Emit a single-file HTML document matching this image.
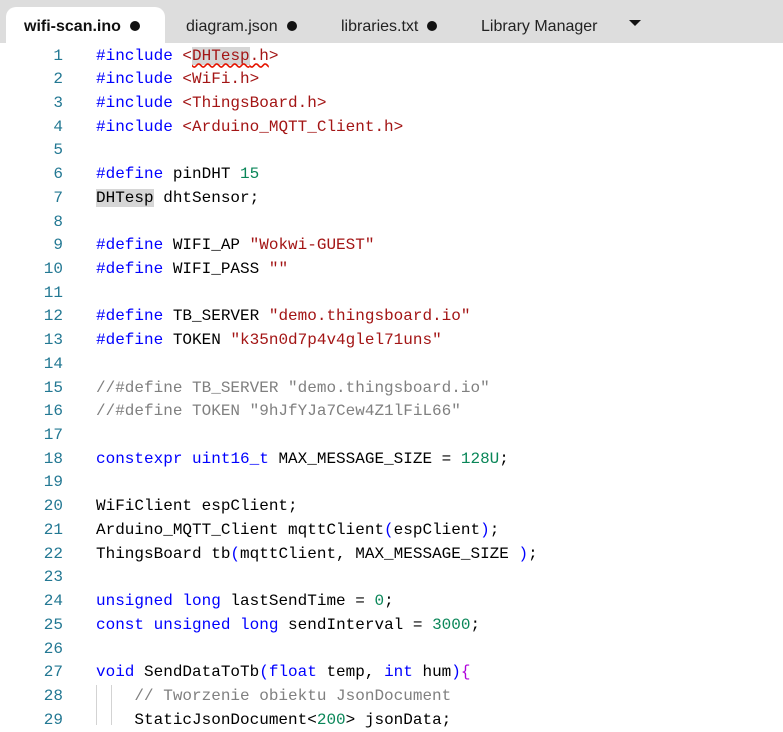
<!DOCTYPE html>
<html><head><meta charset="utf-8"><style>
body{margin:0;width:783px;height:723px;overflow:hidden;background:#fff;position:relative;font-family:"Liberation Sans",Arial,sans-serif}
.bar{position:absolute;left:0;top:0;width:783px;height:43px;background:#dddddd}
.tab{position:absolute;top:18px;font-size:16px;color:#222;white-space:nowrap}
.act{position:absolute;left:6px;top:7px;width:159px;height:36px;background:#fff;border-radius:10px 10px 0 0}
.dot{display:inline-block;width:10px;height:10px;border-radius:50%;background:#111;margin-left:9px;vertical-align:0px}
.l{position:absolute;left:0;height:24px;line-height:24px;font-family:"Liberation Mono",monospace;font-size:16px;white-space:pre;color:#000}
.n{position:absolute;left:0;width:63px;text-align:right;color:#237893}
.c{position:absolute;left:96px}
.k{color:#0000ff}.s{color:#a31515}.m{color:#098658}.g{color:#808080}.p{color:#af00db}
.hl{background:#d6d6d6}
.sq{text-decoration:underline wavy #e51400;text-underline-offset:3px}
.guide{position:absolute;width:1px;background:#d3d3d3}
</style></head><body>
<div class="bar"></div>
<div class="act"></div>
<div class="tab" style="left:24px;font-weight:bold;color:#111">wifi-scan.ino<span class="dot"></span></div>
<div class="tab" style="left:186px">diagram.json<span class="dot"></span></div>
<div class="tab" style="left:341px">libraries.txt<span class="dot"></span></div>
<div class="tab" style="left:481px">Library Manager</div>
<div style="position:absolute;left:629px;top:20px;width:0;height:0;border-left:6px solid transparent;border-right:6px solid transparent;border-top:6px solid #111"></div>
<div class="guide" style="left:96px;top:685px;height:40px"></div>
<div class="guide" style="left:111px;top:685px;height:40px"></div>
<div id="code"></div>
<script>
var L=[
'<span class="k">#include</span> <span class="s">&lt;<span class="sq"><span class="hl">DHTesp</span>.h</span>&gt;</span>',
'<span class="k">#include</span> <span class="s">&lt;WiFi.h&gt;</span>',
'<span class="k">#include</span> <span class="s">&lt;ThingsBoard.h&gt;</span>',
'<span class="k">#include</span> <span class="s">&lt;Arduino_MQTT_Client.h&gt;</span>',
'',
'<span class="k">#define</span> pinDHT <span class="m">15</span>',
'<span class="hl">DHTesp</span> dhtSensor;',
'',
'<span class="k">#define</span> WIFI_AP <span class="s">"Wokwi-GUEST"</span>',
'<span class="k">#define</span> WIFI_PASS <span class="s">""</span>',
'',
'<span class="k">#define</span> TB_SERVER <span class="s">"demo.thingsboard.io"</span>',
'<span class="k">#define</span> TOKEN <span class="s">"k35n0d7p4v4glel71uns"</span>',
'',
'<span class="g">//#define TB_SERVER "demo.thingsboard.io"</span>',
'<span class="g">//#define TOKEN "9hJfYJa7Cew4Z1lFiL66"</span>',
'',
'<span class="k">constexpr</span> <span class="k">uint16_t</span> MAX_MESSAGE_SIZE = <span class="m">128U</span>;',
'',
'WiFiClient espClient;',
'Arduino_MQTT_Client mqttClient<span class="k">(</span>espClient<span class="k">)</span>;',
'ThingsBoard tb<span class="k">(</span>mqttClient, MAX_MESSAGE_SIZE <span class="k">)</span>;',
'',
'<span class="k">unsigned</span> <span class="k">long</span> lastSendTime = <span class="m">0</span>;',
'<span class="k">const</span> <span class="k">unsigned</span> <span class="k">long</span> sendInterval = <span class="m">3000</span>;',
'',
'<span class="k">void</span> SendDataToTb<span class="k">(float</span> temp, <span class="k">int</span> hum<span class="k">)</span><span class="p">{</span>',
'    <span class="g">// Tworzenie obiektu JsonDocument</span>',
'    StaticJsonDocument&lt;<span class="m">200</span>&gt; jsonData;'
];
var h='';
for(var i=0;i<L.length;i++){var t=43.5+i*23.72;
h+='<div class="l" style="top:'+t.toFixed(2)+'px;width:783px"><span class="n">'+(i+1)+'</span><span class="c">'+L[i]+'</span></div>';}
document.getElementById('code').innerHTML=h;
</script>
</body></html>
